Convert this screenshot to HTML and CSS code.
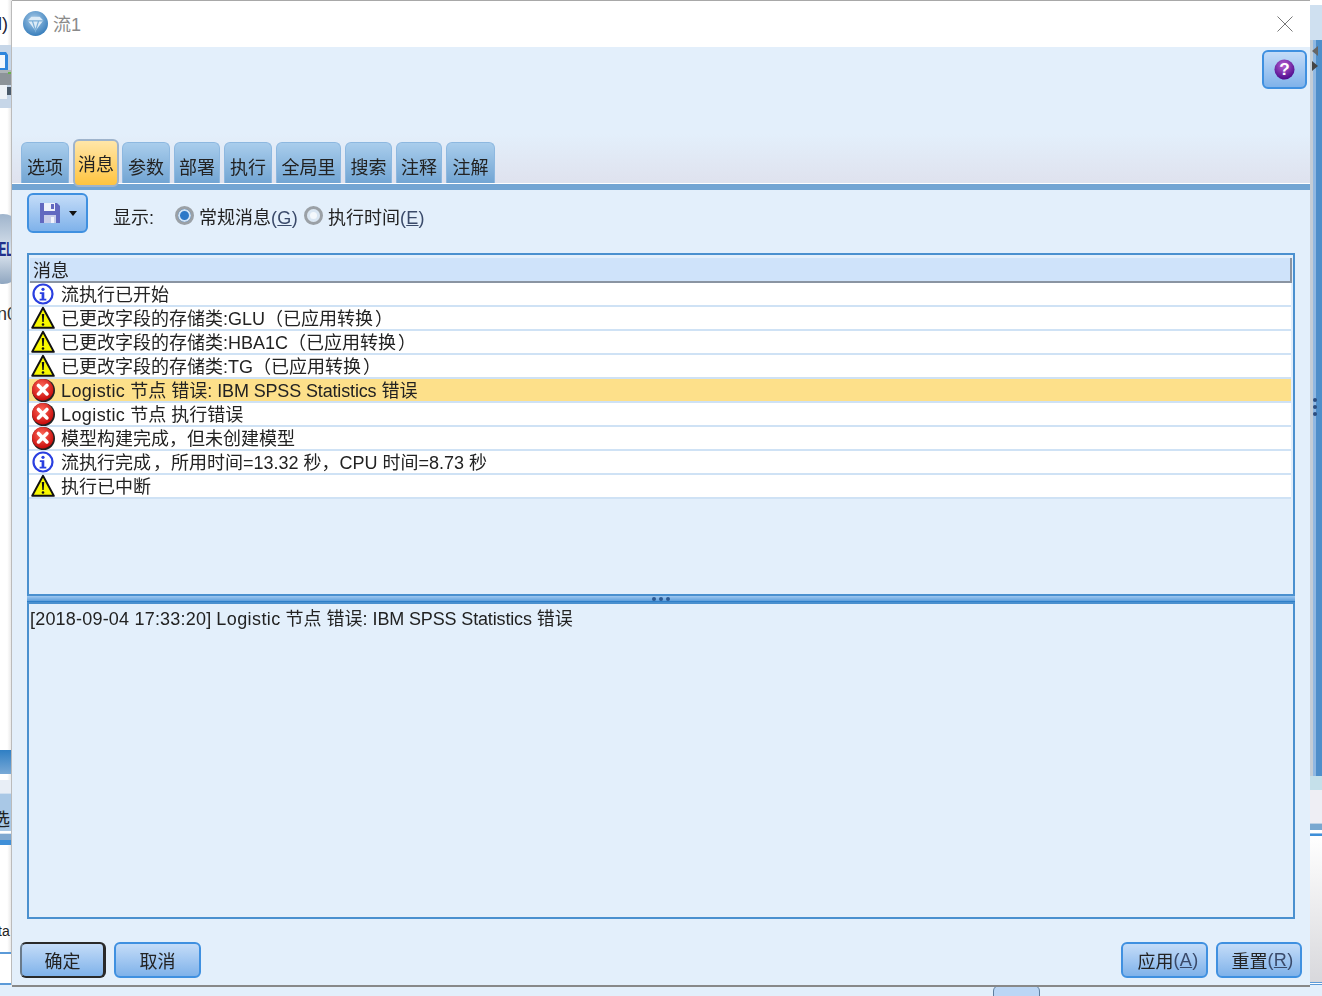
FILE: index.html
```html
<!DOCTYPE html>
<html lang="zh">
<head>
<meta charset="utf-8">
<title>流1</title>
<link rel="stylesheet" href="styles.css">
</head>
<body>
<div class="desk desk-left">
  <span class="d-a">l)</span>
  <svg class="d-print" viewBox="0 0 12 63" width="12" height="63"><path d="M0 0h12v63H0z" fill="#c6d6e8"/><path d="M0 7h6l2 3v15H0z" fill="#2f86dc"/><path d="M0 10h5v13H0z" fill="#f4f8fc"/><path d="M0 25h11v3H0z" fill="#aeb4b8"/><path d="M0 28h12v12H0z" fill="#8d9499"/><path d="M8 27h4v2H8z" fill="#6ab04c"/><path d="M0 40h7v14H0z" fill="#eef3f8"/><path d="M7 42h4v8H7z" fill="#4a5a6a"/></svg>
  <div class="d-sphere"><span>EL</span></div>
  <span class="d-n">n0</span>
  <div class="d-bar"></div>
  <div class="d-sel"><span>选</span></div>
  <span class="d-ta">ta</span>
  <div class="d-lines"></div>
</div>
<div class="desk desk-right">
  <div class="r-top"></div>
  <div class="r-col"><i class="tri up"></i><i class="tri down"></i><span class="r-dots"><i></i><i></i><i></i></span></div>
  <div class="r-pale"></div>
  <div class="r-band"></div>
  <div class="r-lines"></div>
</div>
<div class="d-tab"></div>
<main class="dialog">
  <header class="title">
    <svg class="logo" viewBox="0 0 24 24" width="25" height="25"><defs><radialGradient id="lg" cx="45%" cy="35%" r="70%"><stop offset="0" stop-color="#a9cbe8"/><stop offset="1" stop-color="#2f78b8"/></radialGradient></defs><circle cx="12" cy="12" r="12" fill="url(#lg)"/><path d="M4.500 9l3.500-3.500h8L19.500 9 12 19z" fill="#dcebf7"/><path d="M4.500 9.500h15M9 9.500l3 9.500 3-9.500" fill="none" stroke="#79aed8" stroke-width="1.200"/></svg>
    <span class="title-text">流1</span>
    <svg class="close" viewBox="0 0 16 16" width="16" height="16"><path d="M.5.5l15 15M15.500.5l-15 15" stroke="#777" stroke-width="1" fill="none"/></svg>
  </header>
  <div class="head-area">
    <div class="help-row">
      <button class="btn help" type="button">
        <svg viewBox="0 0 22 22" width="21" height="21"><defs><radialGradient id="hg" cx="45%" cy="30%" r="70%"><stop offset="0" stop-color="#b65ed0"/><stop offset="1" stop-color="#4c0a8c"/></radialGradient></defs><circle cx="11" cy="11" r="10.500" fill="url(#hg)"/><text x="11" y="17" text-anchor="middle" class="q">?</text></svg>
      </button>
    </div>
    <nav class="tabs">
      <span class="tab">选项</span>
      <span class="tab active">消息</span>
      <span class="tab">参数</span>
      <span class="tab w46">部署</span>
      <span class="tab">执行</span>
      <span class="tab w65">全局里</span>
      <span class="tab w47">搜索</span>
      <span class="tab w46">注释</span>
      <span class="tab w49">注解</span>
    </nav>
  </div>
  <div class="strip"></div>
  <section class="panel">
    <div class="tools">
      <button class="btn save" type="button">
        <svg viewBox="0 0 22 22" width="22" height="22"><path d="M1 1h17l3 3v17H1z" fill="#6268c0"/><path d="M5 1h11v8H5z" fill="#eef1fa"/><path d="M12 2h3v5h-3z" fill="#6268c0"/><path d="M5 13h12v8H5z" fill="#c8cdea"/><path d="M12 15h3v6h-3z" fill="#f2f4fc"/></svg>
        <i class="caret"></i>
      </button>
      <span class="show">显示:</span>
      <label class="radio on"><i></i><span>常规消息<b>(<u>G</u>)</b></span></label>
      <label class="radio"><i></i><span>执行时间<b>(<u>E</u>)</b></span></label>
    </div>
    <div class="list">
      <div class="list-head">消息</div>
      <div class="row"><svg class="ic"><use href="#info"/></svg><span>流执行已开始</span></div>
      <div class="row"><svg class="ic"><use href="#warn"/></svg><span>已更改字段的存储类:GLU（已应用转换<em>）</em></span></div>
      <div class="row"><svg class="ic"><use href="#warn"/></svg><span>已更改字段的存储类:HBA1C（已应用转换<em>）</em></span></div>
      <div class="row"><svg class="ic"><use href="#warn"/></svg><span>已更改字段的存储类:TG（已应用转换<em>）</em></span></div>
      <div class="row sel"><svg class="ic"><use href="#err"/></svg><span><span class="lg">Logistic</span> 节点 错误: <span class="ibm">IBM SPSS Statistics</span> 错误</span></div>
      <div class="row"><svg class="ic"><use href="#err"/></svg><span><span class="lg">Logistic</span> 节点 执行错误</span></div>
      <div class="row"><svg class="ic"><use href="#err"/></svg><span>模型构建完成，但未创建模型</span></div>
      <div class="row"><svg class="ic"><use href="#info"/></svg><span>流执行完成<em>，</em>所用时间=13.32 秒，CPU 时间=8.73 秒</span></div>
      <div class="row"><svg class="ic"><use href="#warn"/></svg><span>执行已中断</span></div>
    </div>
    <div class="split"><span class="dots"><i></i><i></i><i></i></span></div>
    <div class="detail"><span class="date">[2018-09-04 17:33:20]</span> <span class="lg">Logistic</span> 节点 错误: <span class="ibm">IBM SPSS Statistics</span> 错误</div>
    <footer class="foot">
      <button class="btn act default" type="button">确定</button>
      <button class="btn act" type="button">取消</button>
      <span class="spacer"></span>
      <button class="btn act mn" type="button">应用<b>(<u>A</u>)</b></button>
      <button class="btn act mn w86" type="button">重置<b>(<u>R</u>)</b></button>
    </footer>
  </section>
</main>
<svg class="defs" width="0" height="0">
  <defs>
    <radialGradient id="eg" cx="45%" cy="35%" r="65%"><stop offset="0" stop-color="#ff6a5a"/><stop offset="1" stop-color="#c80a0a"/></radialGradient>
    <symbol id="info" viewBox="0 0 24 24"><circle cx="12" cy="12" r="9.500" fill="#fff" stroke="#2a3fe0" stroke-width="2.200"/><circle cx="12" cy="7.300" r="1.600" fill="#2a3fe0"/><path d="M8.800 10.300h4.500v6.400h2v1.800H8.600v-1.800h2v-4.600H8.800z" fill="#2a3fe0"/></symbol>
    <symbol id="warn" viewBox="0 0 24 24"><path d="M12 1.800L22.800 21.800H1.200z" fill="#f8f800" stroke="#111" stroke-width="1.900" stroke-linejoin="round"/><path d="M10.800 8h2.400l-.5 8h-1.400z" fill="#111"/><circle cx="12" cy="18.500" r="1.300" fill="#111"/></symbol>
    <symbol id="err" viewBox="0 0 24 24"><circle cx="12.500" cy="12.500" r="11.500" fill="#222"/><circle cx="11.700" cy="11.700" r="10.700" fill="url(#eg)"/><path d="M7.500 7.500l8.400 8.400M15.900 7.500l-8.400 8.400" stroke="#fff" stroke-width="3.600" stroke-linecap="round"/></symbol>
  </defs>
</svg>
</body>
</html>
```
FILE: styles.css
```css
* { box-sizing: border-box; }
html, body { margin: 0; height: 996px; overflow: hidden; }
body {
  position: relative;
  background: #e3effb;
  font-family: "Liberation Sans", "Noto Sans CJK SC", sans-serif;
  font-size: 18px;
  color: #222;
}
.defs { position: absolute; }
em { font-style: normal; }

/* Windows behind the dialog */
.desk { position: absolute; top: 0; height: 985px; overflow: hidden; }
.desk-left { left: 0; width: 12px; background: linear-gradient(90deg, #fff 60%, #e4e4e4); }
.desk-left > * { position: absolute; }
.d-a { left: -2px; top: 14px; color: #223; }
.d-print { left: 0; top: 45px; }
.d-sphere { left: -22px; top: 214px; width: 50px; height: 70px; border-radius: 50%; background: linear-gradient(#9fb4cc, #dbe4ee 55%, #8fa6c0); }
.d-sphere span { position: absolute; left: 21px; top: 22px; font-size: 20px; font-weight: 700; line-height: 26px; color: #20308c; transform: scaleX(.55); transform-origin: left; }
.d-n { left: -3px; top: 304px; color: #333; line-height: 20px; }
.d-bar { left: 0; top: 750px; width: 12px; height: 24px; background: linear-gradient(#2f7fc4, #79a9d6); }
.d-sel { left: 0; top: 780px; width: 12px; height: 65px; background: linear-gradient(#e8eef6 0 20%, #a9c8e6 22% 78%, #fff 79% 82%, #7fa8d0 83% 92%, #3f8fd8 93%); }
.d-sel span { position: absolute; left: -8px; top: 30px; line-height: 20px; }
.d-ta { left: -2px; top: 922px; font-size: 14px; line-height: 18px; }
.d-lines { left: 0; top: 952px; width: 12px; height: 33px; background: #fff; border-top: 2px solid #5b9ad8; border-bottom: 2px solid #5b9ad8; }
.desk-right { left: 1310px; width: 12px; background: #fff; }
.desk-right > div { position: absolute; left: 0; width: 12px; }
.r-top { top: 5px; height: 35px; background: #cfe0f0; }
.r-col { top: 40px; height: 736px; background: linear-gradient(90deg, #c3cdd6 0 3px, #8fb8e2 3px 6px, #4f8fca 6px); }
.tri { position: absolute; left: 2px; width: 0; height: 0; border: 5px solid transparent; }
.tri.up { top: 6px; border-right: 6px solid #666; border-left: 0; }
.tri.down { top: 21px; border-left: 6px solid #444; border-right: 0; }
.r-dots { position: absolute; left: 3px; top: 358px; display: flex; flex-direction: column; gap: 3px; }
.r-dots i { width: 4px; height: 4px; border-radius: 50%; background: #2c4f80; }
.r-pale { top: 776px; height: 14px; background: #c5e0ea; }
.r-band { top: 790px; height: 46px; background: linear-gradient(#eeeef4 0 72%, #7aa8d0 74% 86%, #fff 88% 94%, #3f8fd8 95%); }
.r-lines { top: 836px; height: 149px; background: linear-gradient(#fff, #d8d8dc); border-bottom: 3px double #5b9ad8; }
.d-tab { position: absolute; left: 993px; top: 985px; width: 47px; height: 14px; background: #bcd6f5; border: 1px solid #5f7f9f; border-radius: 6px 6px 0 0; }

/* Dialog */
.dialog {
  position: absolute; left: 12px; top: 1px; width: 1298px; height: 984px;
  display: flex; flex-direction: column;
  background: #e3effb;
  box-shadow: 0 -1px 0 #a8a8a8, -1px 0 0 #bbb, 0 2px 0 #888;
  filter: blur(.3px);
}
.title { height: 46px; flex: none; display: flex; align-items: center; padding: 0 17px 0 11px; background: #fff; }
.logo { margin-right: 5px; margin-bottom: 1px; }
.title-text { color: #8a8a8a; font-size: 18px; margin-bottom: 3px; }
.close { margin-left: auto; }
.head-area { height: 136px; flex: none; display: flex; flex-direction: column; justify-content: space-between; background: linear-gradient(#e3effb 0 64%, #dfe2ee); }
.help-row { display: flex; justify-content: flex-end; padding: 3px 3px 0 0; }
.btn {
  display: inline-flex; align-items: center; justify-content: center; padding: 0;
  font: inherit; color: #222;
  border: 2px solid #3f90e0; border-radius: 6px;
  background: linear-gradient(#c4dcf8, #7fb2ea);
}
.help { width: 45px; height: 39px; }
.q { font: 700 18px "Liberation Sans", sans-serif; fill: #fff; }
.tabs { display: flex; align-items: flex-end; gap: 4px; padding-left: 9px; height: 44px; }
.tab {
  height: 41px; width: 48px; padding-top: 11px; text-align: center; line-height: 28px; font-size: 18px;
  border: 1px solid #8db8e0; border-bottom: 0; border-radius: 6px 6px 0 0;
  background: linear-gradient(#a9cdec, #72a5d3);
}
.w46 { width: 46px; } .w47 { width: 47px; } .w49 { width: 49px; } .w65 { width: 65px; }
.tab.active {
  width: 46px; height: 48px; margin: 0 -1px -4px 0; padding-top: 10px; position: relative;
  border: 2px solid #9fb4cc; border-radius: 6px;
  background: linear-gradient(#ffe6a8, #ffc440);
}
.strip { height: 7px; flex: none; background: #73a5d3; border-top: 1px solid #fff; }

.panel { flex: 1; display: flex; flex-direction: column; padding: 3px 15px 0; min-height: 0; }
.tools { height: 40px; flex: none; display: flex; align-items: center; }
.save { width: 61px; height: 40px; gap: 8px; flex: none; }
.caret { width: 0; height: 0; border: 4px solid transparent; border-top: 5px solid #111; border-bottom: 0; }
.show { margin: 6px 21px 0 25px; }
.radio { display: inline-flex; align-items: center; gap: 5px; margin: 6px 6px 0 0; position: relative; top: -1px; }
.radio i { width: 19px; height: 19px; border-radius: 50%; border: 3px solid #9aa0a6; background: #f4f8fc; box-shadow: inset 0 0 0 3px #d9e6f3; }
.radio.on i { background: #2c78c8; box-shadow: inset 0 0 0 2px #cfe2f5; }
.radio span { position: relative; top: 1px; }
b { font-weight: 400; color: #3a4a6a; letter-spacing: .3px; }
.list { height: 343px; flex: none; margin-top: 20px; border: 2px solid #4a90cf; background: #e3effb; padding-top: 3px; }
.list-head { height: 25px; margin: 0 1px 0 1px; line-height: 26px; padding-left: 3px; background: #cfe3fa; border-right: 2px solid #8a94a2; border-bottom: 2px solid #8a94a2; }
.row { height: 24px; display: flex; align-items: center; padding-left: 2px; background: #fff; border-bottom: 2px solid #cfe2f5; line-height: 24px; white-space: nowrap; margin-right: 2px; }
.row > span { margin-left: 6px; position: relative; top: 1px; }
.row.sel { background: #fde08a; }
.row em { margin-left: 2px; }
.lg { letter-spacing: .4px; }
.ibm { letter-spacing: -.15px; }
.date { letter-spacing: .2px; }
.ic { width: 24px; height: 24px; flex: none; overflow: visible; }
.split { height: 6px; flex: none; display: flex; justify-content: center; align-items: center; background: linear-gradient(#9ec7f0, #5e9fdc); border-bottom: 1px solid #2f7fc8; }
.dots { display: flex; gap: 3px; }
.dots i { width: 4px; height: 4px; border-radius: 50%; background: #2c5a94; }
.detail { height: 317px; flex: none; border: 2px solid #4a90cf; padding: 3px 1px; line-height: 25px; background: #e3effb; white-space: nowrap; }
.foot { flex: 1; display: flex; align-items: flex-start; gap: 8px; padding-top: 23px; margin: 0 -7px; }
.act { width: 87px; height: 36px; }
.mn { padding-left: 7px; }
.w86 { width: 86px; }
.default { width: 86px; border-color: #2a2a2a #2a2a2a #2a2a2a #6a7a8a; border-width: 2px 3px 2px 2px; }
.spacer { flex: 1; }
```
